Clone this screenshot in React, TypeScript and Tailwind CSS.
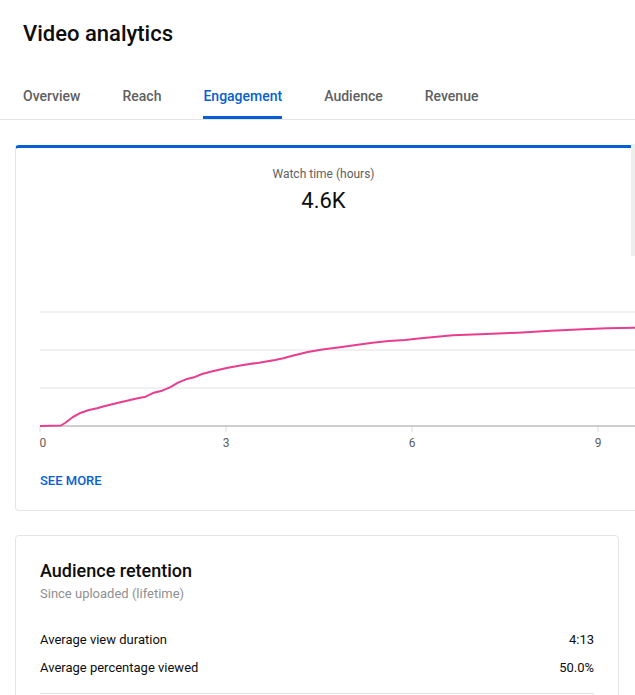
const tabs = ['Overview', 'Reach', 'Engagement', 'Audience', 'Revenue'];

// cumulative watch time, in svg coords (origin at the card's inner left edge)
const watchTime: [number, number][] = [
  [24, 126], [45, 125.5], [49, 123], [57, 117], [65, 112.7], [73, 110], [81, 108.3],
  [89, 106], [105.5, 102], [121.7, 98.3], [129.7, 96.7], [137.8, 92.7], [146, 90.7],
  [154, 87.3], [162, 82.7], [170, 79.3], [178, 77.3], [186, 74], [194.5, 71.7],
  [210.7, 68], [227, 65], [243, 62.7], [259, 60], [267.4, 58.3], [275.5, 56],
  [291.7, 52], [308, 49.3], [324, 47.3], [340, 45], [356.5, 42.7], [372.7, 41],
  [389, 40], [405, 38.3], [421, 36.7], [437, 35.3], [470, 34], [502, 32.7],
  [534.6, 30.7], [567, 29.3], [591, 28.3], [621, 27.7],
];

const ticks = [
  { x: 24, label: '0', anchor: 'start' as const, dx: -0.5 },
  { x: 210, label: '3', anchor: 'middle' as const, dx: 0 },
  { x: 396, label: '6', anchor: 'middle' as const, dx: 0 },
  { x: 582, label: '9', anchor: 'middle' as const, dx: 0 },
];

const WatchTimeChart = () => {
  const d = watchTime.map(([x, y], i) => `${i ? 'L' : 'M'}${x} ${y}`).join(' ');
  return (
    <svg width={622} height={160} className="block">
      {[12, 50, 88].map((y) => (
        <line key={y} x1={24} x2={622} y1={y} y2={y} stroke="#ececec" strokeWidth={1.5} />
      ))}
      {ticks.map((t) => (
        <g key={t.label}>
          <line x1={t.x} x2={t.x} y1={126} y2={132} stroke="#dcdcdc" strokeWidth={1} />
          <text
            x={t.x + t.dx}
            y={147}
            textAnchor={t.anchor}
            fontSize={12}
            fill="#606060"
            fontFamily="Roboto, sans-serif"
          >
            {t.label}
          </text>
        </g>
      ))}
      <line x1={24} x2={622} y1={126} y2={126} stroke="#9e9e9e" strokeWidth={1} />
      <path d={d} fill="none" stroke="#e93d8f" strokeWidth={2} strokeLinejoin="round" />
    </svg>
  );
};

const Row = ({ label, value }: { label: string; value: string }) => (
  <div className="flex h-[28px] items-center justify-between text-[13px] text-[#0d0d0d]">
    <span>{label}</span>
    <span>{value}</span>
  </div>
);

export default function App() {
  return (
    <div className="relative h-[695px] w-[635px] overflow-hidden bg-white font-['Roboto',sans-serif]">
      <h1 className="px-[23px] pt-[20px] text-[22px] leading-[28px] font-medium text-[#0d0d0d]">
        Video analytics
      </h1>

      {/* tab bar */}
      <div className="mt-[22px] border-b border-[#e5e5e5]">
        <div className="flex gap-[42px] pl-[23px]">
          {tabs.map((t) => {
            const active = t === 'Engagement';
            return (
              <div
                key={t}
                className={
                  active
                    ? 'h-[49px] border-b-[3px] border-[#065fd4] pt-[16px] text-[14px] leading-[20px] font-medium text-[#065fd4]'
                    : 'h-[49px] pt-[16px] text-[14px] leading-[20px] font-medium text-[#606060]'
                }
              >
                {t}
              </div>
            );
          })}
        </div>
      </div>

      {/* watch time card */}
      <div className="mt-[25px] ml-[15px] h-[366px] w-[640px] rounded-[4px] border border-t-[3px] border-[#e5e5e5] border-t-[#065fd4]">
        <div className="w-[615px] pt-[18px] text-center">
          <div className="text-[12px] leading-[16px] text-[#606060]">Watch time (hours)</div>
          <div className="mt-[5px] text-[22px] leading-[28px] text-[#0d0d0d]">4.6K</div>
        </div>
        <div className="mt-[85px]">
          <WatchTimeChart />
        </div>
        <div className="mt-[13px] pl-[24px] text-[13px] leading-[16px] font-medium text-[#065fd4]">SEE MORE</div>
      </div>

      {/* audience retention card */}
      <div className="mt-[24px] ml-[15px] h-[200px] w-[604px] rounded-[4px] border border-[#e5e5e5] px-[24px] pt-[23px]">
        <div className="text-[18px] leading-[24px] font-medium text-[#0d0d0d]">Audience retention</div>
        <div className="mt-[2px] text-[13px] leading-[18px] text-[#909090]">Since uploaded (lifetime)</div>
        <div className="mt-[23px]">
          <Row label="Average view duration" value="4:13" />
          <Row label="Average percentage viewed" value="50.0%" />
        </div>
        <div className="mt-[11px] border-t border-[#e0e0e0]" />
      </div>

      {/* edge of the next card peeking in */}
      <div className="absolute top-[144px] left-[631px] h-[112px] w-[4px] bg-[#eeeeee]" />
    </div>
  );
}
